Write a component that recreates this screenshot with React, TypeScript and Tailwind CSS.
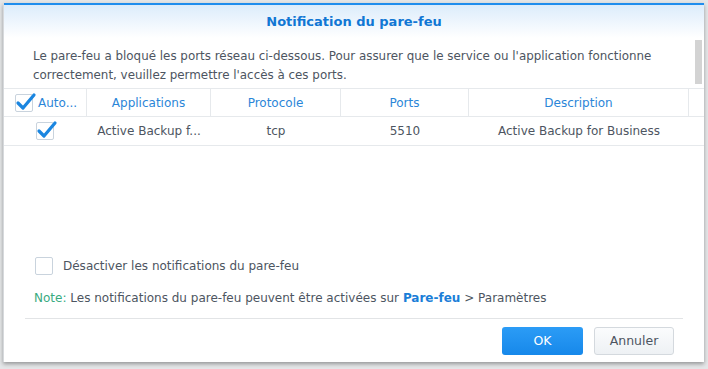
const font = { fontFamily: '"DejaVu Sans", Verdana, sans-serif' };

function Tick({ checked }: { checked: boolean }) {
  return (
    <span className="relative inline-block w-[18px] h-[18px] border border-[#c9d3dd] rounded-[2px] bg-white shrink-0">
      {checked && (
        <svg className="absolute -left-[1px] -top-[3px]" width="22" height="20" viewBox="0 0 22 20">
          <path d="M3 11 L8 16 L19 3" fill="none" stroke="#1b86e0" strokeWidth="3.2" strokeLinecap="round" strokeLinejoin="round" />
        </svg>
      )}
    </span>
  );
}

export default function App() {
  const cols = [
    { w: 'w-[124px]', label: 'Applications' },
    { w: 'w-[130px]', label: 'Protocole' },
    { w: 'w-[128px]', label: 'Ports' },
    { w: 'w-[220px]', label: 'Description' },
  ];
  const row = ['Active Backup f...', 'tcp', '5510', 'Active Backup for Business'];

  return (
    <div className="w-[708px] h-[369px] bg-[#e4e6e8] pt-[3px] pl-[3px] overflow-hidden" style={font}>
      <div className="w-[701px] h-[359px] bg-white flex flex-col shadow-[0_2px_4px_rgba(0,0,0,0.35)] border-l border-[#d6d9dc]">
        <div className="h-[2px] bg-[#1f8ded]" />
        <div className="h-[33px] flex items-center justify-center bg-gradient-to-b from-[#dcecfb] to-white">
          <span className="text-[13px] font-bold text-[#1177d4]">Notification du pare-feu</span>
        </div>

        <div className="flex">
          <div className="flex-1 flex flex-col">
            <p className="pl-[29px] pt-[9px] text-[11.9px] leading-[19px] text-[#4d5561]">
              Le pare-feu a bloqué les ports réseau ci-dessous. Pour assurer que le service ou l'application fonctionne
              <br />
              correctement, veuillez permettre l'accès à ces ports.
            </p>
          </div>
          <div className="w-[7px] h-[44px] bg-[#d3d3d3] mt-[2px] mr-[2px]" />
        </div>

        <div className="mt-[3px] text-[12px]">
          <div className="flex h-[29px] border-t border-b border-[#e6e9ec] text-[#2b86d8]">
            <div className="w-[83px] flex items-center pl-[11px] gap-[5px] border-r border-[#e6e9ec]">
              <Tick checked />
              <span>Auto...</span>
            </div>
            {cols.map((c) => (
              <div key={c.label} className={`${c.w} flex items-center justify-center border-r border-[#e6e9ec]`}>
                {c.label}
              </div>
            ))}
          </div>
          <div className="flex h-[29px] border-b border-[#e6e9ec] text-[#4d5561]">
            <div className="w-[83px] flex items-center pl-[32px]">
              <Tick checked />
            </div>
            {row.map((v, i) => (
              <div key={i} className={`${cols[i].w} flex items-center justify-center`}>
                {v}
              </div>
            ))}
          </div>
        </div>

        <div className="flex-1" />

        <div className="pl-[31px] flex items-center gap-[10px] text-[12px] text-[#4d5561]">
          <Tick checked={false} />
          <span>Désactiver les notifications du pare-feu</span>
        </div>
        <p className="pl-[30px] mt-[14px] text-[12px] text-[#4d5561]">
          <span className="text-[#3aab7f]">Note:</span> Les notifications du pare-feu peuvent être activées sur{' '}
          <span className="font-bold text-[#1a7ed8]">Pare-feu</span> &gt; Paramètres
        </p>

        <div className="mx-[21px] mt-[11px] border-t border-[#e2e4e6]" />
        <div className="flex justify-end gap-[11px] pr-[30px] pt-[8px] pb-[7px]">
          <button className="w-[81px] h-[28px] rounded-[3px] bg-gradient-to-b from-[#2b9cf6] to-[#1688ea] text-white text-[12.5px]">
            OK
          </button>
          <button className="w-[80px] h-[28px] rounded-[3px] bg-gradient-to-b from-[#fbfcfd] to-[#eef1f4] border border-[#d4d9de] text-[#4d5561] text-[12.5px]">
            Annuler
          </button>
        </div>
      </div>
    </div>
  );
}
